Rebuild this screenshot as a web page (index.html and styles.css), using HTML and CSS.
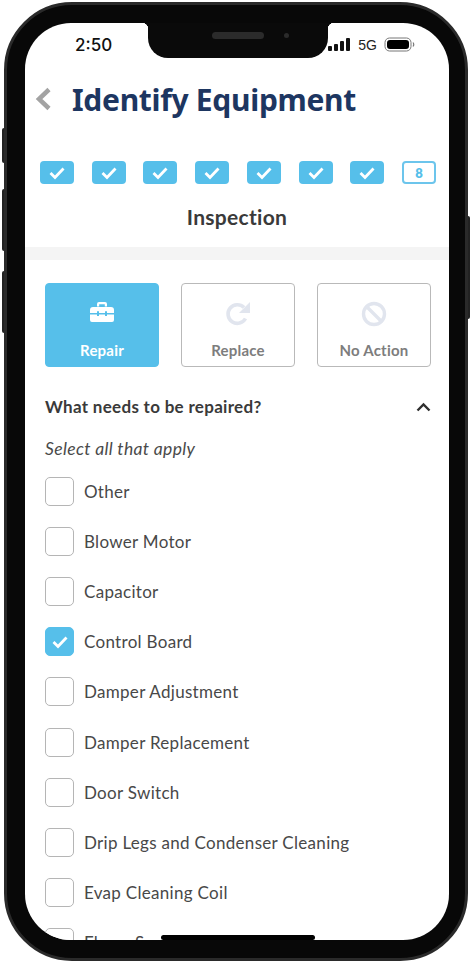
FILE: index.html
```html
<!DOCTYPE html>
<html lang="en">
<head>
<meta charset="utf-8">
<title>Identify Equipment</title>
<link rel="stylesheet" href="styles.css">
</head>
<body>
<div class="phone">
  <span class="side side-a"></span><span class="side side-b"></span><span class="side side-c"></span><span class="side side-d"></span>
  <div class="bezel">
    <div class="screen">
      <div class="notch"><span class="speaker"></span><span class="camera"></span></div>
      <div class="status">
        <span class="time">2:50</span>
        <div class="status-right">
          <svg class="signal" width="22" height="13" viewBox="0 0 22 13"><rect x="0" y="8" width="4" height="5" rx="1"/><rect x="6" y="6" width="4" height="7" rx="1"/><rect x="12" y="3" width="4" height="10" rx="1"/><rect x="18" y="0" width="4" height="13" rx="1"/></svg>
          <span class="net">5G</span>
          <svg class="battery" width="31" height="15" viewBox="0 0 31 15"><rect x="1" y="1" width="26" height="13" rx="4.5" fill="none" stroke="#777" stroke-width="1"/><rect x="3" y="3" width="22" height="9" rx="3" fill="#000"/><path d="M29 5.500q1.500 2 0 4" fill="none" stroke="#777" stroke-width="1.200"/></svg>
        </div>
      </div>
      <header class="title-row">
        <svg class="back" width="17" height="24" viewBox="0 0 17 24"><path d="M14 2.500 4 12l10 9.500" fill="none" stroke="#a3a3a3" stroke-width="4.500"/></svg>
        <h1 class="title">Identify Equipment</h1>
      </header>
      <div class="steps">
        <span class="step"><svg width="18" height="14" viewBox="0 0 18 14"><path d="m2.500 7 4.500 4.500 8.500-9" class="tick"/></svg></span>
        <span class="step"><svg width="18" height="14" viewBox="0 0 18 14"><path d="m2.500 7 4.500 4.500 8.500-9" class="tick"/></svg></span>
        <span class="step"><svg width="18" height="14" viewBox="0 0 18 14"><path d="m2.500 7 4.500 4.500 8.500-9" class="tick"/></svg></span>
        <span class="step"><svg width="18" height="14" viewBox="0 0 18 14"><path d="m2.500 7 4.500 4.500 8.500-9" class="tick"/></svg></span>
        <span class="step"><svg width="18" height="14" viewBox="0 0 18 14"><path d="m2.500 7 4.500 4.500 8.500-9" class="tick"/></svg></span>
        <span class="step"><svg width="18" height="14" viewBox="0 0 18 14"><path d="m2.500 7 4.500 4.500 8.500-9" class="tick"/></svg></span>
        <span class="step"><svg width="18" height="14" viewBox="0 0 18 14"><path d="m2.500 7 4.500 4.500 8.500-9" class="tick"/></svg></span>
        <span class="step step-current">8</span>
      </div>
      <h2 class="section-name">Inspection</h2>
      <div class="band"></div>
      <div class="actions">
        <div class="action action-on">
          <svg class="toolbox" width="26" height="22" viewBox="0 0 26 22"><path d="M8 5.500V3a2 2 0 0 1 2-2h6a2 2 0 0 1 2 2v2.500h-2.200V3.200H10.200V5.500z" fill="#fff"/><path d="M1 9a3 3 0 0 1 3-3h18a3 3 0 0 1 3 3v3H18v-1.700h-2V12h-6v-1.700H8V12H1zM1 13.500h7V15h2v-1.500h6V15h2v-1.500h7V19a2 2 0 0 1-2 2H3a2 2 0 0 1-2-2z" fill="#fff"/></svg>
          <span class="action-label">Repair</span>
        </div>
        <div class="action">
          <svg width="26" height="26" viewBox="0 0 26 26"><path d="M20.500 17.500A9.300 9.300 0 1 1 19 6.500" fill="none" stroke="#e1e5ee" stroke-width="3.600"/><path d="M25 1v11H14z" fill="#e1e5ee"/></svg>
          <span class="action-label">Replace</span>
        </div>
        <div class="action">
          <svg width="26" height="26" viewBox="0 0 26 26"><circle cx="13" cy="13" r="10.500" fill="none" stroke="#e1e5ee" stroke-width="3.400"/><path d="m5.500 5.500 15 15" stroke="#e1e5ee" stroke-width="3.400"/></svg>
          <span class="action-label">No Action</span>
        </div>
      </div>
      <div class="question">
        <span>What needs to be repaired?</span>
        <svg width="15" height="10" viewBox="0 0 15 10"><path d="M1.500 8.500 7.500 2.500l6 6" fill="none" stroke="#2f2f2f" stroke-width="2.400"/></svg>
      </div>
      <p class="hint">Select all that apply</p>
      <ul class="options">
        <li class="option"><span class="box"></span>Other</li>
        <li class="option"><span class="box"></span>Blower Motor</li>
        <li class="option"><span class="box"></span>Capacitor</li>
        <li class="option"><span class="box box-on"><svg width="18" height="14" viewBox="0 0 18 14"><path d="m2.500 7 4.500 4.500 8.500-9" class="tick"/></svg></span>Control Board</li>
        <li class="option"><span class="box"></span>Damper Adjustment</li>
        <li class="option"><span class="box"></span>Damper Replacement</li>
        <li class="option"><span class="box"></span>Door Switch</li>
        <li class="option"><span class="box"></span>Drip Legs and Condenser Cleaning</li>
        <li class="option"><span class="box"></span>Evap Cleaning Coil</li>
        <li class="option"><span class="box"></span>Flame Sensor</li>
      </ul>
      <span class="home"></span>
    </div>
  </div>
</div>
</body>
</html>
```
FILE: styles.css
```css
* { box-sizing: border-box; }
html, body { margin: 0; padding: 0; background: #fff; }
body { width: 472px; height: 961px; overflow: hidden; padding: 2px 4px 0; font-family: "Lato", "Noto Sans", sans-serif; color: #3c3c3c; }

.phone { position: relative; width: 464px; height: 959px; }
.side { position: absolute; width: 4px; background: #222; }
.side-a { left: -2px; top: 126px; height: 35px; border-radius: 2px 0 0 2px; }
.side-b { left: -2px; top: 187px; height: 62px; border-radius: 2px 0 0 2px; }
.side-c { left: -2px; top: 269px; height: 62px; border-radius: 2px 0 0 2px; }
.side-d { right: -2px; top: 214px; height: 103px; border-radius: 0 2px 2px 0; }

.bezel { position: relative; width: 100%; height: 100%; padding: 18px; background: #080808; border: 3px solid #2a2a2a; border-radius: 68px; }
.screen { position: relative; width: 424px; height: 917px; overflow: hidden; background: #fff; border-radius: 46px; }

.notch { position: absolute; left: 123px; top: 0; width: 180px; height: 35px; background: #0a0a0a; border-radius: 0 0 20px 20px; display: flex; align-items: center; justify-content: center; gap: 20px; padding: 0 0 0 25px; }
.notch::before, .notch::after { content: ""; position: absolute; top: 0; width: 6px; height: 6px; }
.notch::before { left: -6px; background: radial-gradient(circle at 0 100%, transparent 6px, #0a0a0a 6.500px); }
.notch::after { right: -6px; background: radial-gradient(circle at 100% 100%, transparent 6px, #0a0a0a 6.500px); }
.speaker { width: 52px; height: 7px; margin-bottom: 11px; border-radius: 4px; background: #2b2b2b; }
.camera { width: 5px; height: 5px; margin-bottom: 11px; border-radius: 50%; background: #2b2b2b; }

.status { display: flex; justify-content: space-between; align-items: center; height: 44px; padding: 0 34px 0 50px; }
.time { font: 500 17px "Inter", "Liberation Sans", sans-serif; color: #111; }
.status-right { display: flex; align-items: center; gap: 7px; margin-top: -1px; }
.signal { fill: #111; width: 22px; height: 13px; margin-right: 1px; }
.net { font: 400 14px "Liberation Sans", sans-serif; color: #222; }

.title-row { display: flex; align-items: center; height: 40px; margin-top: 12px; padding-left: 10px; }
.back { flex: none; }
.title { margin: 0 0 0 20px; font: 700 30px "Noto Sans", sans-serif; letter-spacing: -0.3px; color: #1d3661; white-space: nowrap; }

.steps { display: flex; justify-content: space-between; padding: 0 13px 0 15px; margin-top: 42px; }
.step { display: flex; width: 34px; height: 23px; align-items: center; justify-content: center; border-radius: 4px; background: #56bfea; }
.step-current { background: #fff; border: 2px solid #6cc5ec; font: 800 13px "Lato", sans-serif; color: #56bfea; }
.tick { fill: none; stroke: #fff; stroke-width: 2.800; }

.section-name { margin: 21px 0 0; font: 700 21px/24px "Lato", sans-serif; letter-spacing: 0.3px; text-align: center; color: #3a3a3a; }
.band { height: 13px; margin-top: 18px; background: #f4f4f4; }

.actions { display: flex; justify-content: space-between; padding: 0 18px 0 20px; margin-top: 23px; }
.action { display: flex; flex-direction: column; align-items: center; width: 114px; height: 84px; padding-top: 17px; border: 1.500px solid #b9b9b9; border-radius: 4px; }
.action svg { height: 26px; }
.action svg.toolbox { margin-top: -2.500px; margin-bottom: 2.500px; }
.action-on { background: #56bfea; border-color: #56bfea; }
.action-label { margin-top: 14px; font: 700 15px/18px "Lato", sans-serif; letter-spacing: 0.2px; color: #7d7d7d; }
.action-on .action-label { color: #fff; }

.question { display: flex; justify-content: space-between; align-items: center; margin-top: 29px; padding: 0 18px 0 20px; font: 700 17px/22px "Lato", sans-serif; letter-spacing: 0.3px; color: #3a3a3a; }
.hint { margin: 20px 0 0 20px; font: italic 400 17.500px/22px "Lato", sans-serif; letter-spacing: 0.35px; color: #4a4a4a; }

.options { list-style: none; margin: 6px 0 0; padding: 0 0 0 20px; }
.option { display: flex; align-items: center; height: 50.200px; font: 400 17px "Lato", sans-serif; letter-spacing: 0.3px; color: #484848; }
.box { display: flex; align-items: center; justify-content: center; flex: none; width: 29px; height: 29px; margin-right: 10px; border: 1.500px solid #b5b5b5; border-radius: 5px; background: #fff; }
.box-on { background: #56bfea; border-color: #56bfea; }

.home { position: absolute; left: 136px; bottom: 0; width: 154px; height: 5px; border-radius: 3px; background: #000; }
```
